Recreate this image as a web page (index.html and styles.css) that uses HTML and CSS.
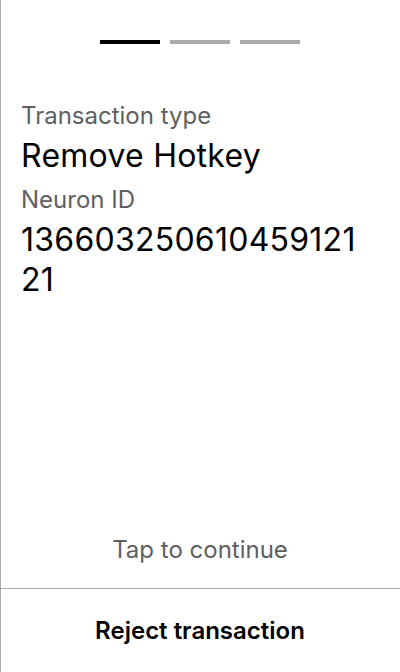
FILE: index.html
```html
<!DOCTYPE html>
<html>
<head>
<meta charset="utf-8">
<link rel="stylesheet" href="styles.css">
</head>
<body>
<div class="screen">
  <div class="progress">
    <span class="bar active"></span>
    <span class="bar"></span>
    <span class="bar"></span>
  </div>
  <div class="content">
    <div class="label">Transaction type</div>
    <div class="value">Remove Hotkey</div>
    <div class="label">Neuron ID</div>
    <div class="value">13660325061045912121</div>
  </div>
  <div class="tap">Tap to continue</div>
  <div class="reject">Reject transaction</div>
</div>
</body>
</html>
```
FILE: styles.css
```css
html, body {
  margin: 0;
  padding: 0;
  background: #fff;
}
.screen {
  width: 399px;
  height: 672px;
  border-left: 1px solid #aaa;
  display: flex;
  flex-direction: column;
  font-family: Inter, "Noto Sans", sans-serif;
  color: #000;
}
.progress {
  display: flex;
  justify-content: center;
  gap: 10px;
  padding-top: 40px;
  margin-left: -1px;
}
.bar {
  width: 60px;
  height: 4px;
  background: #aaa;
}
.bar.active {
  background: #000;
}
.content {
  padding: 58px 40px 0 20px;
  flex: 1;
}
.label {
  font-size: 24px;
  line-height: 28px;
  color: #606060;
  margin-bottom: 6px;
}
.value {
  font-size: 32px;
  line-height: 40px;
  letter-spacing: 0.25px;
  margin-bottom: 10px;
  word-break: break-all;
}
.tap {
  text-align: center;
  font-size: 24px;
  line-height: 28px;
  color: #606060;
  padding-bottom: 24px;
  border-bottom: 1px solid #aaa;
  margin-left: -1px;
}
.reject {
  height: 83px;
  display: flex;
  align-items: center;
  justify-content: center;
  font-size: 24px;
  font-weight: 600;
  margin-left: -1px;
}
```
